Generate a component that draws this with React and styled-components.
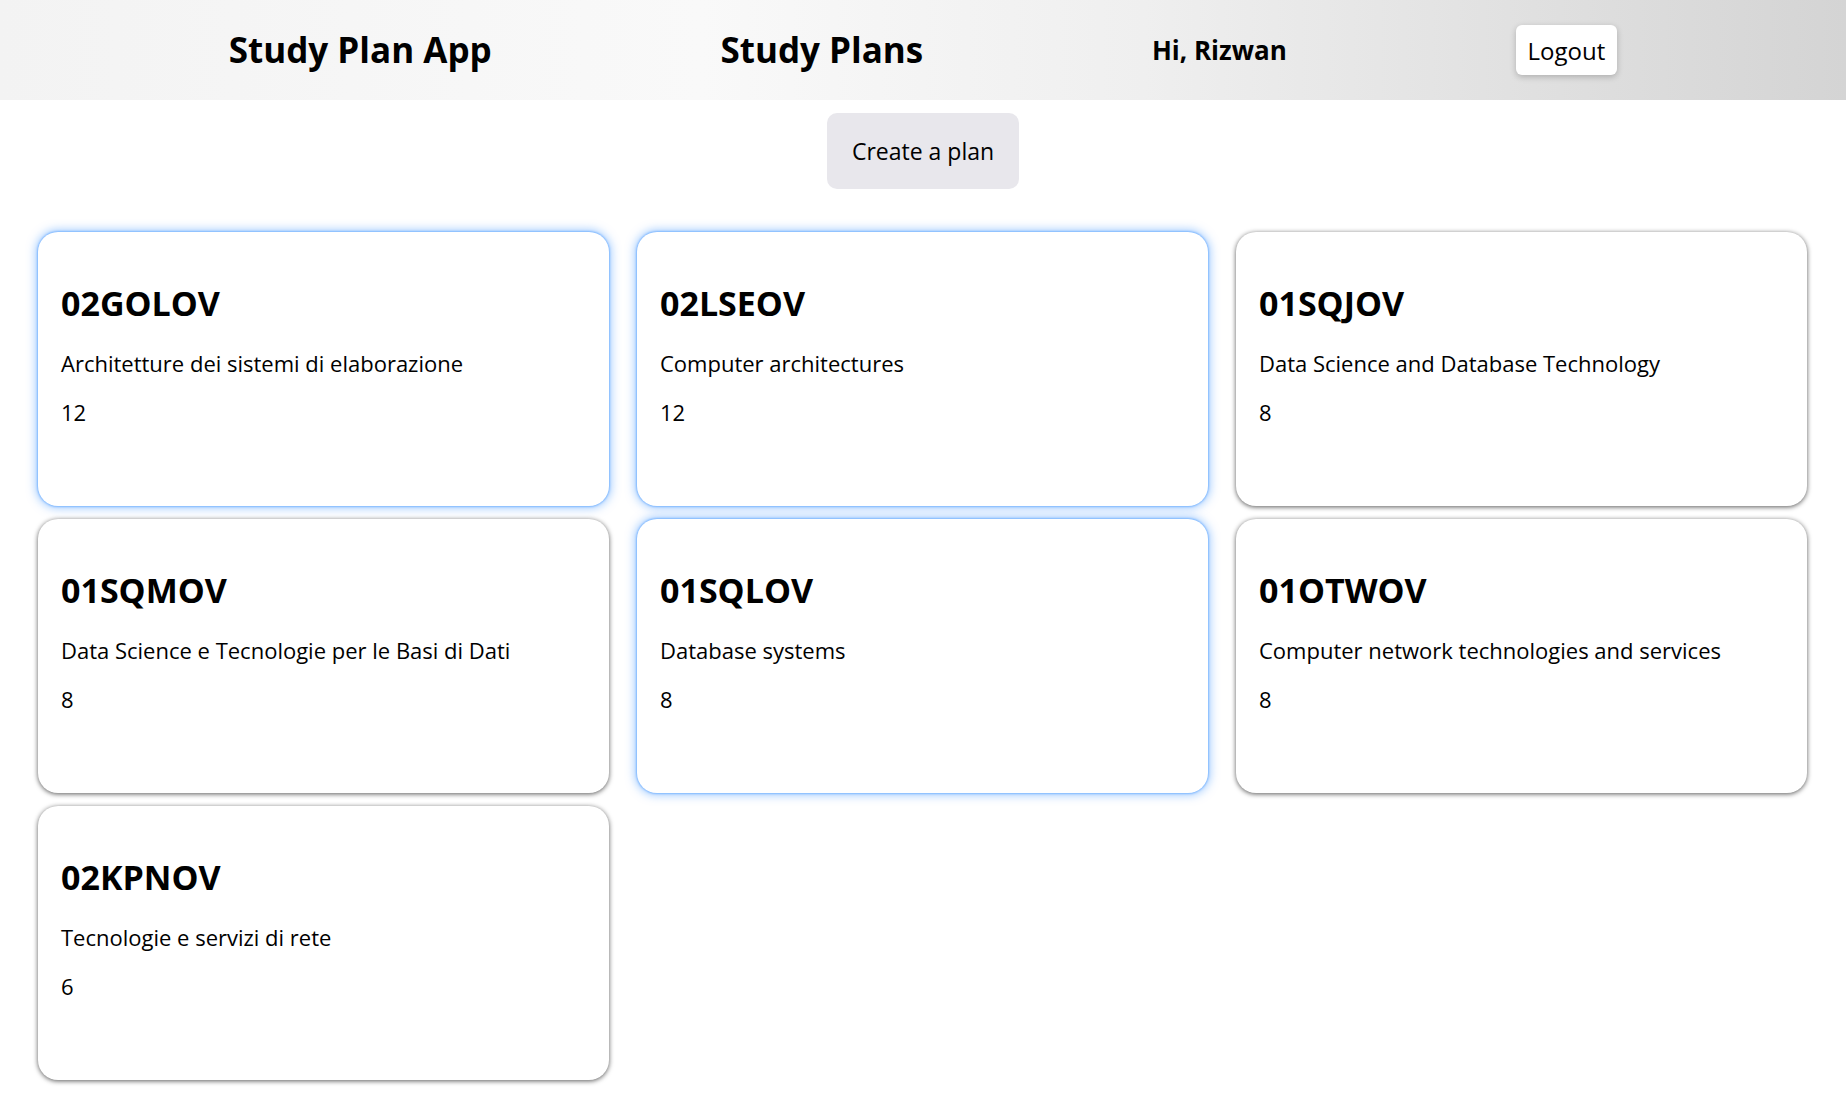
import React from "react";
import styled, { createGlobalStyle } from "styled-components";

const GlobalStyle = createGlobalStyle`
  body {
    margin: 0;
    font-family: "Open Sans", "Noto Sans", sans-serif;
    color: #000;
    background: #fff;
  }
  * { box-sizing: border-box; }
`;

const Header = styled.header`
  height: 100px;
  display: flex;
  align-items: center;
  justify-content: space-evenly;
  background: linear-gradient(90deg, #f3f3f3 0%, #f9f9f9 38%, #efefef 62%, #d4d4d4 100%);
`;

const Title = styled.h2`
  margin: 0;
  font-size: 35px;
  font-weight: 700;
  line-height: 1.2;
`;

const Greeting = styled.h4`
  margin: 2px 0 0;
  font-size: 26px;
  font-weight: 700;
  line-height: 1.2;
`;

const LogoutButton = styled.button`
  height: 50px;
  padding: 0 12px;
  border: none;
  border-radius: 6px;
  background: #fff;
  box-shadow: 0 2px 6px rgba(0, 0, 0, 0.22);
  font-family: inherit;
  font-size: 24px;
  color: #000;
`;

const Toolbar = styled.div`
  display: flex;
  justify-content: center;
  padding-top: 13px;
`;

const CreateButton = styled.button`
  width: 192px;
  height: 76px;
  border: none;
  border-radius: 10px;
  background: #e8e7ec;
  font-family: inherit;
  font-size: 23px;
  color: #000;
`;

const Grid = styled.div`
  display: grid;
  grid-template-columns: repeat(3, 1fr);
  column-gap: 28px;
  row-gap: 13px;
  padding: 43px 39px 30px 38px;
`;

const Card = styled.div`
  height: 274px;
  padding: 51px 23px 0;
  background: #fff;
  border-radius: 20px;
  box-shadow: ${(p) =>
    p.$selected
      ? "0 0 2px 1px rgba(120, 180, 255, 0.9), 0 0 8px 3px rgba(100, 170, 255, 0.5)"
      : "0 1px 5px rgba(0, 0, 0, 0.65)"};
`;

const Code = styled.h3`
  margin: 0 0 23px;
  font-size: 34px;
  font-weight: 700;
  line-height: 1.2;
`;

const Text = styled.p`
  margin: 0 0 16px;
  font-size: 22px;
  line-height: 1.5;
`;

const courses = [
  { code: "02GOLOV", name: "Architetture dei sistemi di elaborazione", credits: 12, selected: true },
  { code: "02LSEOV", name: "Computer architectures", credits: 12, selected: true },
  { code: "01SQJOV", name: "Data Science and Database Technology", credits: 8 },
  { code: "01SQMOV", name: "Data Science e Tecnologie per le Basi di Dati", credits: 8 },
  { code: "01SQLOV", name: "Database systems", credits: 8, selected: true },
  { code: "01OTWOV", name: "Computer network technologies and services", credits: 8 },
  { code: "02KPNOV", name: "Tecnologie e servizi di rete", credits: 6 },
];

export default function App() {
  return (
    <>
      <GlobalStyle />
      <Header>
        <Title>Study Plan App</Title>
        <Title>Study Plans</Title>
        <Greeting>Hi, Rizwan</Greeting>
        <LogoutButton>Logout</LogoutButton>
      </Header>
      <Toolbar>
        <CreateButton>Create a plan</CreateButton>
      </Toolbar>
      <Grid>
        {courses.map((c) => (
          <Card key={c.code} $selected={c.selected}>
            <Code>{c.code}</Code>
            <Text>{c.name}</Text>
            <Text>{c.credits}</Text>
          </Card>
        ))}
      </Grid>
    </>
  );
}
